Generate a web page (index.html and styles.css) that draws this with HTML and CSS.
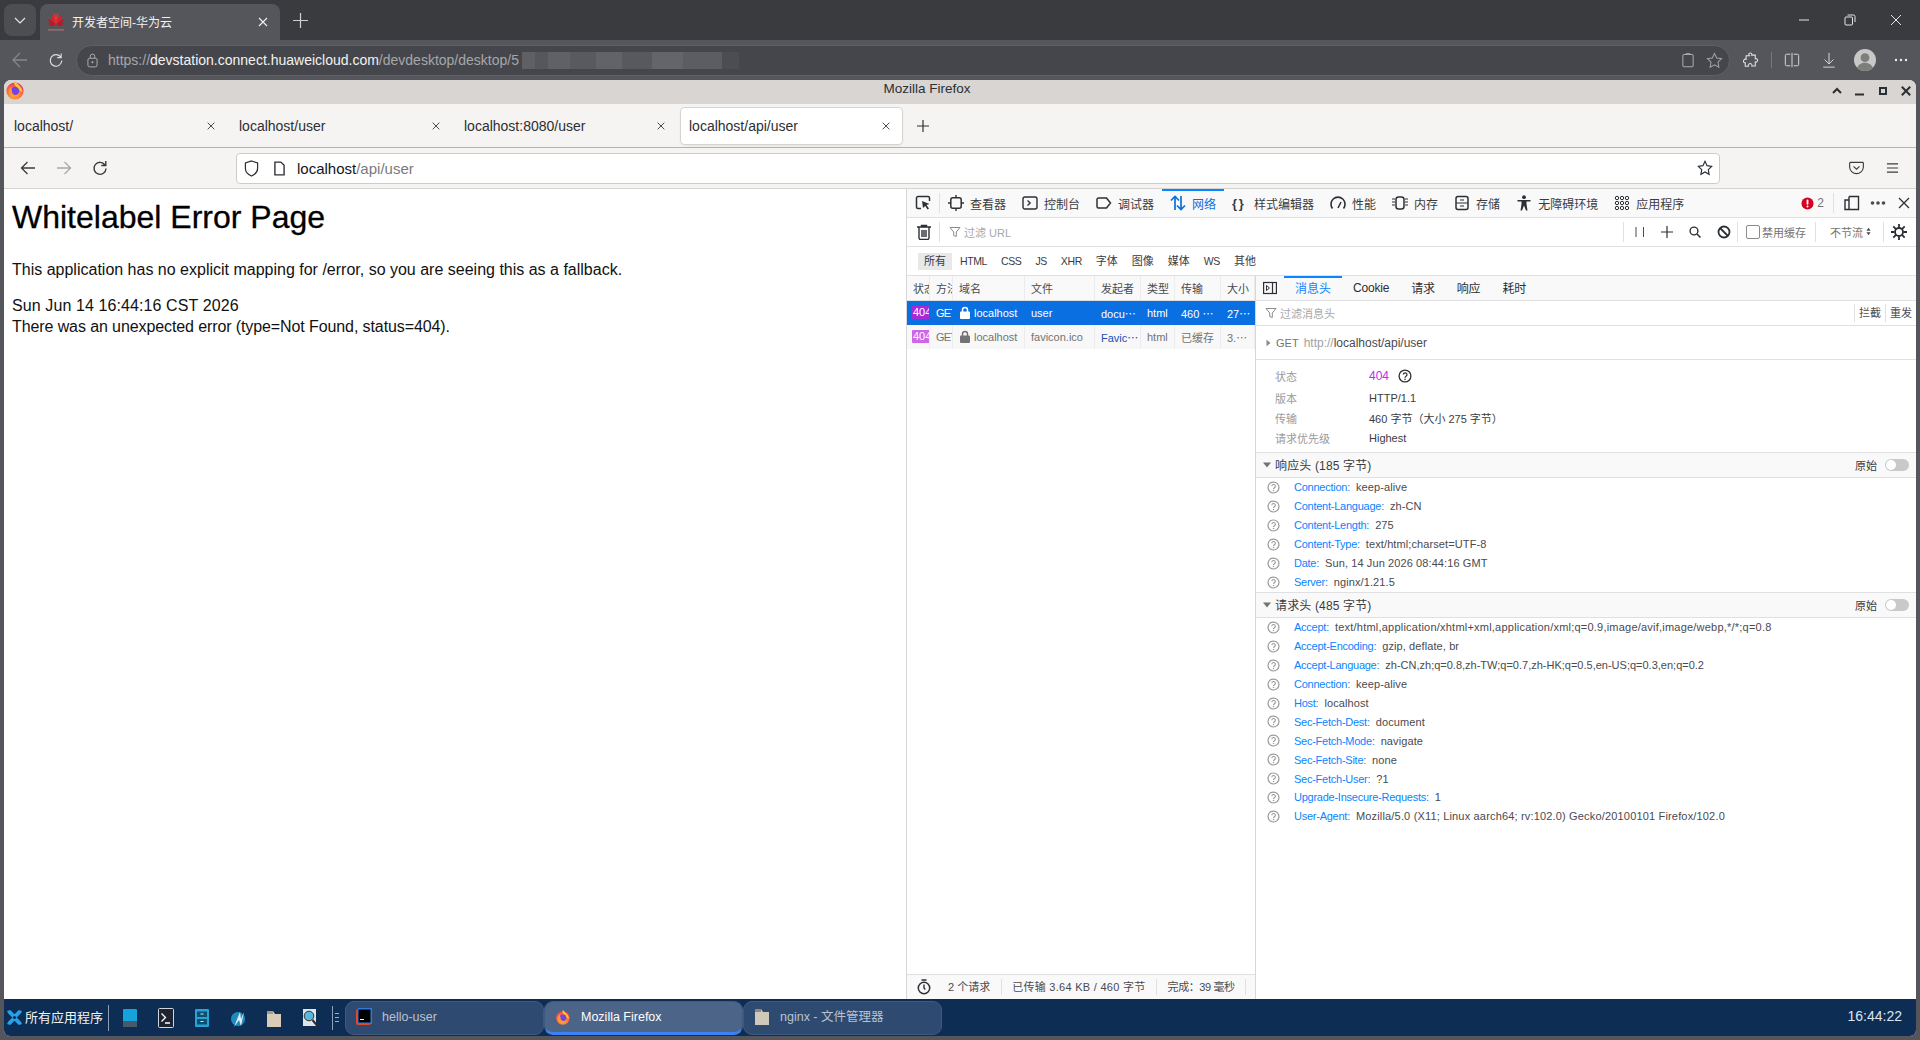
FILE: index.html
```html
<!DOCTYPE html>
<html lang="zh-CN">
<head>
<meta charset="utf-8">
<title>开发者空间-华为云</title>
<link rel="stylesheet" href="styles.css">
</head>
<body>
<svg class="defs" width="0" height="0">
  <defs>
    <radialGradient id="fx" cx="0.45" cy="0.7" r="0.8"><stop offset="0" stop-color="#ffbd2e"/><stop offset="0.5" stop-color="#ff7139"/><stop offset="1" stop-color="#e31587"/></radialGradient>
    <symbol id="firefox" viewBox="0 0 20 20">
      <circle cx="10" cy="11" r="8.6" fill="url(#fx)"/>
      <path d="M10 .8c1 3 4 3.500 5.500 6.200 1.500 2 1.800 4 2 5.500L14 10 9 4z" fill="#ffc52e"/>
      <circle cx="10" cy="11" r="4.200" fill="#7542e5"/>
      <path d="M5.500 7c2 3 1 6 3 7.500 2 1 4.500.5 5.500-1.500-1 4-5 5-8 3C3.500 14 3.500 10 5.500 7z" fill="#ff9a2e"/>
    </symbol>
    <symbol id="q" viewBox="0 0 14 14">
      <circle cx="7" cy="7" r="5.900" fill="none" stroke="currentColor" stroke-width="1.300"/>
      <path d="M5.200 5.600a1.900 1.800 0 1 1 2.800 1.600c-.7.400-1 .8-1 1.500" fill="none" stroke="currentColor" stroke-width="1.200"/>
      <circle cx="7" cy="10.300" r=".8" fill="currentColor"/>
    </symbol>
    <symbol id="close" viewBox="0 0 12 12"><path d="M2 2l8 8M10 2l-8 8" stroke="currentColor" stroke-width="1.100" fill="none"/></symbol>
    <symbol id="filter" viewBox="0 0 12 12"><path d="M1 1.500h10L7.300 6v4.500l-2.600-1V6z" fill="none" stroke="currentColor" stroke-width="1"/></symbol>
    <symbol id="lock" viewBox="0 0 12 13"><path d="M3.500 6V4a2.500 2.500 0 0 1 5 0v2" fill="none" stroke="currentColor" stroke-width="1.500"/><rect x="1" y="5.500" width="10" height="7.500" rx="1" fill="currentColor"/></symbol>
    <symbol id="tri" viewBox="0 0 8 8"><path d="M0 1.500h8L4 6.500z" fill="currentColor"/></symbol>
  </defs>
</svg>

<header class="edge-tabs">
  <div class="edge-list"><svg class="ico14" viewBox="0 0 14 14"><path d="M2 5l5 5 5-5" fill="none" stroke="#e6e6e6" stroke-width="1.200"/></svg></div>
  <div class="edge-tab">
    <svg class="huawei" viewBox="0 0 18 20">
      <path d="M8.600 13C5 11 3 8 4.500 3 6 3.500 8 8 8.600 13zM9.400 13c3.600-2 5.600-5 4.100-10C12 3.500 10 8 9.400 13z" fill="#d8202c"/>
      <path d="M8.500 13C5 12 2 10.500 .8 7c2 .5 6 3 7.700 6zM9.500 13c3.500-1 6.500-2.500 7.700-6-2 .5-6 3-7.700 6zM8 14c-3 .5-5 0-7-3 3-.5 5 1 7 3zM10 14c3 .5 5 0 7-3-3-.5-5 1-7 3z" fill="#c8141e"/>
      <path d="M6.800 1.500C8 .5 9 3 9 7c0-4 1-6.500 2.200-5.500C12 4 10 9 9 12 8 9 6 4 6.800 1.500z" fill="#e8303a"/>
      <rect x="1" y="17" width="16" height="1.800" fill="#8d6a6c"/>
    </svg>
    <span class="edge-tab-title">开发者空间-华为云</span>
    <svg class="ico12 edge-tab-x"><use href="#close"/></svg>
  </div>
  <svg class="edge-plus" viewBox="0 0 16 16"><path d="M8 0v16M0 8h16" stroke="#cfcfcf" stroke-width="1.300"/></svg>
  <div class="edge-winctl">
    <svg class="ico12" viewBox="0 0 12 12"><path d="M1 6h10" stroke="#e6e6e6" stroke-width="1"/></svg>
    <svg class="ico12" viewBox="0 0 12 12"><rect x="1" y="3" width="7.500" height="8" rx="1" fill="none" stroke="#e6e6e6"/><path d="M3.500 1h6a1.500 1.500 0 0 1 1.500 1.500V8" fill="none" stroke="#e6e6e6"/></svg>
    <svg class="ico12" viewBox="0 0 12 12"><path d="M1 1l10 10M11 1L1 11" stroke="#e6e6e6" stroke-width="1"/></svg>
  </div>
</header>

<nav class="edge-nav">
  <svg class="edge-ni back" viewBox="0 0 18 18"><path d="M16 9H2M9 2L2 9l7 7" fill="none" stroke="#85868a" stroke-width="1.300"/></svg>
  <svg class="edge-ni reload" viewBox="0 0 18 18"><path d="M14.500 6A6.500 6.500 0 1 0 15.500 9.500M14.800 1.800v4.500h-4.500" fill="none" stroke="#dcdcdc" stroke-width="1.300"/></svg>
  <div class="edge-url">
    <svg class="edge-lock" viewBox="0 0 12 16"><rect x="1" y="5.500" width="10" height="9.500" rx="2" fill="none" stroke="#b5b5b8"/><path d="M3.500 5.500V3.500a2.500 2.500 0 0 1 5 0v2" fill="none" stroke="#b5b5b8"/><circle cx="6" cy="10" r="1.100" fill="#b5b5b8"/></svg>
    <span class="url-text"><span class="u-dim">https://</span><span class="u-host">devstation.connect.huaweicloud.com</span><span class="u-dim">/devdesktop/desktop/5</span></span>
    <span class="mosaic"></span>
    <span class="spacer"></span>
    <svg class="u-ic" viewBox="0 0 14 18"><path d="M2.500 2.500h9a1.500 1.500 0 0 1 1.500 1.500v11.500a1.500 1.500 0 0 1-1.500 1.500h-9A1.500 1.500 0 0 1 1 15.500V4a1.500 1.500 0 0 1 1.500-1.500z" fill="none" stroke="#a8a9ac" stroke-width="1.200"/><path d="M4.500 2.500v-1h5v1" fill="none" stroke="#a8a9ac"/></svg>
    <svg class="u-star" viewBox="0 0 18 18"><path d="M9 1.500l2.300 4.900 5.200.7-3.800 3.700.9 5.300L9 13.500l-4.600 2.600.9-5.300L1.500 7.100l5.200-.7z" fill="none" stroke="#a0a1a4" stroke-width="1.100"/></svg>
  </div>
  <svg class="edge-ni puzzle" viewBox="0 0 18 18"><path d="M7 1.500c2-1.200 3.500.7 2.800 2h4v4c1.500-.5 3 1 2.500 2.500s-2 1.500-2.500 1.200v4.500H10c.5-1.500-.7-2.700-2-2.700S5.700 14.700 6 16H2.500v-4C.8 12.500-.2 10.500 1 9s2-1 2.500-.8V4.300h3.800C6.800 3.500 6.300 2 7 1.500z" fill="none" stroke="#e2e2e2" stroke-width="1.200"/></svg>
  <span class="edge-sep"></span>
  <svg class="edge-ni split" viewBox="0 0 18 18"><path d="M7 2.500H3a1.500 1.500 0 0 0-1.500 1.500v10A1.500 1.500 0 0 0 3 15.500h4M11 2.500h4A1.500 1.500 0 0 1 16.500 4v10a1.500 1.500 0 0 1-1.500 1.500h-4M9 1v16" fill="none" stroke="#d8d8d8" stroke-width="1.100"/></svg>
  <svg class="edge-ni dl" viewBox="0 0 18 18"><path d="M9 1v12M4 8.500l5 5 5-5M2.500 17h13" fill="none" stroke="#d8d8d8" stroke-width="1.100"/></svg>
  <svg class="avatar" viewBox="0 0 24 24"><circle cx="12" cy="12" r="12" fill="#c8c8c6"/><circle cx="12" cy="9.500" r="4.800" fill="#7e7e7c"/><path d="M3.500 20.500c1.500-4 5-5.500 8.500-5.500s7 1.500 8.500 5.500A12 12 0 0 1 12 24a12 12 0 0 1-8.500-3.500z" fill="#7e7e7c"/></svg>
  <svg class="edge-dots" viewBox="0 0 14 4"><circle cx="2" cy="2" r="1.200" fill="#eee"/><circle cx="7" cy="2" r="1.200" fill="#eee"/><circle cx="12" cy="2" r="1.200" fill="#eee"/></svg>
</nav>

<div class="desktop">
  <main class="ffwin">
    <div class="ff-title">
      <svg class="ff-logo"><use href="#firefox"/></svg>
      <span class="ff-title-text">Mozilla Firefox</span>
      <div class="ff-ctl">
        <svg class="ico10" viewBox="0 0 10 10"><path d="M1 7l4-4 4 4" fill="none" stroke="#2c2f33" stroke-width="2"/></svg>
        <svg class="ico10" viewBox="0 0 10 10"><path d="M0 8.500h9" stroke="#2c2f33" stroke-width="2"/></svg>
        <svg class="ico10" viewBox="0 0 10 10"><rect x="2" y="2" width="6" height="6" fill="none" stroke="#2c2f33" stroke-width="2"/></svg>
        <svg class="ico10" viewBox="0 0 10 10"><path d="M.8.800l8.400 8.400M9.200.800L.8 9.200" stroke="#2c2f33" stroke-width="2"/></svg>
      </div>
    </div>
    <div class="ff-tabs">
      <div class="ff-tab"><span class="ff-tab-t">localhost/</span><svg class="ico10b"><use href="#close"/></svg></div>
      <div class="ff-tab"><span class="ff-tab-t">localhost/user</span><svg class="ico10b"><use href="#close"/></svg></div>
      <div class="ff-tab"><span class="ff-tab-t">localhost:8080/user</span><svg class="ico10b"><use href="#close"/></svg></div>
      <div class="ff-tab active"><span class="ff-tab-t">localhost/api/user</span><svg class="ico10b"><use href="#close"/></svg></div>
      <svg class="ff-plus" viewBox="0 0 12 12"><path d="M6 0v12M0 6h12" stroke="#2c2f33" stroke-width="1.200"/></svg>
    </div>
    <div class="ff-nav">
      <svg class="ff-ni first" viewBox="0 0 16 16"><path d="M15 8H1.500M7.500 2l-6 6 6 6" fill="none" stroke="#3b3b3f" stroke-width="1.300"/></svg>
      <svg class="ff-ni" viewBox="0 0 16 16"><path d="M1 8h13.500M8.500 2l6 6-6 6" fill="none" stroke="#a8a8a8" stroke-width="1.300"/></svg>
      <svg class="ff-ni" viewBox="0 0 16 16"><path d="M13 5A6 6 0 1 0 14 8.500M13.800 1v4.500H9.300" fill="none" stroke="#3b3b3f" stroke-width="1.400"/></svg>
      <div class="ff-url">
        <svg class="ff-shield" viewBox="0 0 16 18"><path d="M8 1l6.500 2v6c0 4-3 6.500-6.500 8-3.500-1.500-6.500-4-6.500-8V3z" fill="none" stroke="#2c2f33" stroke-width="1.300"/></svg>
        <svg class="ff-page" viewBox="0 0 12 16"><path d="M1 1h6.500L11 4.500V15H1z" fill="none" stroke="#2c2f33" stroke-width="1.500"/></svg>
        <span class="ff-url-t">localhost<span class="dim">/api/user</span></span>
        <span class="spacer"></span>
        <svg class="ff-star" viewBox="0 0 18 18"><path d="M9 1.500l2.300 4.900 5.200.7-3.800 3.700.9 5.300L9 13.500l-4.600 2.600.9-5.300L1.500 7.100l5.200-.7z" fill="none" stroke="#2c2f33" stroke-width="1.300"/></svg>
      </div>
      <svg class="ff-pocket" viewBox="0 0 16 14"><path d="M1.500 1h13a.8.800 0 0 1 .8.800v4.700A7.300 7.300 0 0 1 8 13 7.300 7.300 0 0 1 .7 6.500V1.800A.8.800 0 0 1 1.500 1z" fill="none" stroke="#3b3b3f" stroke-width="1.200"/><path d="M4.800 5.200L8 8.300l3.200-3.100" fill="none" stroke="#3b3b3f" stroke-width="1.200"/></svg>
      <svg class="ff-menu" viewBox="0 0 14 12"><path d="M1 1.500h12M1 6h12M1 10.500h12" stroke="#3b3b3f" stroke-width="1.200"/></svg>
    </div>

    <div class="ff-body">
      <section class="page">
        <h1 class="page-h">Whitelabel Error Page</h1>
        <p class="page-p">This application has no explicit mapping for /error, so you are seeing this as a fallback.</p>
        <div class="page-d date">Sun Jun 14 16:44:16 CST 2026</div>
        <div class="page-d msg">There was an unexpected error (type=Not Found, status=404).</div>
      </section>

      <section class="devtools">
        <div class="dt-tabs">
          <svg class="dt-pick" viewBox="0 0 16 16"><path d="M6 13.500H3A1.500 1.500 0 0 1 1.500 12V3A1.500 1.500 0 0 1 3 1.500h10A1.500 1.500 0 0 1 14.500 3v3" fill="none" stroke="#2c2f33" stroke-width="1.500"/><path d="M7 6l7.500 3-3 1 2.500 3.500-1.500 1-2.300-3.500L8 13z" fill="#2c2f33"/></svg>
          <span class="dt-vsep first"></span>
          <div class="dt-tab"><svg class="dti" viewBox="0 0 16 16"><rect x="2.800" y="2.800" width="10.400" height="10.400" rx="2" fill="none" stroke="#2c2f33" stroke-width="1.500"/><path d="M8 0v2.500M8 13.500V16M0 8h2.500M13.500 8H16" stroke="#2c2f33" stroke-width="1.400"/></svg>查看器</div>
          <div class="dt-tab"><svg class="dti" viewBox="0 0 16 16"><rect x="1" y="2" width="14" height="12" rx="2" fill="none" stroke="#2c2f33" stroke-width="1.400"/><path d="M5.500 5.500L8.200 8l-2.700 2.500" fill="none" stroke="#2c2f33" stroke-width="1.300"/></svg>控制台</div>
          <div class="dt-tab"><svg class="dti" viewBox="0 0 16 16"><path d="M2.500 3h8l4 5-4 5h-8A1.500 1.500 0 0 1 1 11.500v-7A1.500 1.500 0 0 1 2.500 3z" fill="none" stroke="#2c2f33" stroke-width="1.500"/></svg>调试器</div>
          <div class="dt-tab on"><svg class="dti" viewBox="0 0 16 16"><path d="M5 15V2M1 5.500L5 1.500l4 4M11 1v13M7 10.500l4 4 4-4" fill="none" stroke="#0a6fe0" stroke-width="1.700"/></svg>网络</div>
          <div class="dt-tab"><span class="dt-brace">{ }</span>样式编辑器</div>
          <div class="dt-tab"><svg class="dti" viewBox="0 0 16 16"><path d="M2.500 13.500A7 7 0 1 1 13.500 13.500" fill="none" stroke="#2c2f33" stroke-width="1.600"/><path d="M8 13l3-6" stroke="#2c2f33" stroke-width="1.600"/></svg>性能</div>
          <div class="dt-tab"><svg class="dti" viewBox="0 0 16 16"><rect x="4" y="2" width="8" height="12" rx="2.500" fill="none" stroke="#2c2f33" stroke-width="1.500"/><path d="M0 4h3M0 7h3M0 10h3M13 4h3M13 7h3M13 10h3" stroke="#2c2f33"/></svg>内存</div>
          <div class="dt-tab"><svg class="dti" viewBox="0 0 16 16"><rect x="2" y="1.500" width="12" height="13" rx="2" fill="none" stroke="#2c2f33" stroke-width="1.500"/><path d="M2 8h12M6 5h4M6 11h4" stroke="#2c2f33" stroke-width="1.200"/></svg>存储</div>
          <div class="dt-tab"><svg class="dti" viewBox="0 0 16 16"><circle cx="8" cy="2.200" r="1.900" fill="#2c2f33"/><path d="M1.500 5h13v1.500h-4V9l1 6.500H10L8 10.500 6 15.500H4.500l1-6.500V6.500h-4z" fill="#2c2f33"/></svg>无障碍环境</div>
          <div class="dt-tab"><svg class="dti" viewBox="0 0 16 16"><g fill="none" stroke="#2c2f33"><circle cx="3" cy="3" r="1.700"/><circle cx="8" cy="3" r="1.700"/><circle cx="13" cy="3" r="1.700"/><circle cx="3" cy="8" r="1.700"/><circle cx="8" cy="8" r="1.700"/><circle cx="13" cy="8" r="1.700"/><circle cx="3" cy="13" r="1.700"/><circle cx="8" cy="13" r="1.700"/><circle cx="13" cy="13" r="1.700"/></g></svg>应用程序</div>
          <span class="spacer"></span>
          <svg class="dt-err" viewBox="0 0 14 14"><circle cx="7" cy="7" r="6.500" fill="#d70022"/><rect x="6" y="2.800" width="2" height="5.500" rx="1" fill="#fff"/><circle cx="7" cy="10.300" r="1.100" fill="#fff"/></svg>
          <span class="dt-errn">2</span>
          <span class="dt-vsep sep2"></span>
          <svg class="dt-dock" viewBox="0 0 16 16"><path d="M5 1.500h9.500v13H5M5 5H1v9.500h4V1.500" fill="none" stroke="#2c2f33" stroke-width="1.400"/></svg>
          <svg class="dt-more" viewBox="0 0 16 4"><circle cx="2.500" cy="2" r="1.800" fill="#4a4a4f"/><circle cx="8" cy="2" r="1.800" fill="#4a4a4f"/><circle cx="13.500" cy="2" r="1.800" fill="#4a4a4f"/></svg>
          <svg class="dt-x" viewBox="0 0 12 12"><path d="M1 1l10 10M11 1L1 11" stroke="#2c2f33" stroke-width="1.300"/></svg>
        </div>

        <div class="dt-filter">
          <svg class="f-trash" viewBox="0 0 14 16"><path d="M0 3h14M4.500 3V1.500h5V3M2 3.500V14a1.500 1.500 0 0 0 1.500 1.500h7A1.500 1.500 0 0 0 12 14V3.500M5 6v7M7 6v7M9 6v7" fill="none" stroke="#2c2f33" stroke-width="1.400"/></svg>
          <span class="dt-vsep fs1"></span>
          <svg class="f-ic"><use href="#filter"/></svg>
          <span class="f-ph">过滤 URL</span>
          <span class="spacer"></span>
          <span class="dt-vsep"></span>
          <svg class="f-pause" viewBox="0 0 10 10"><path d="M1 0v10M8.500 0v10" stroke="#4a4a4f" stroke-width="1"/></svg>
          <svg class="f-plus" viewBox="0 0 12 12"><path d="M6 0v12M0 6h12" stroke="#2c2f33" stroke-width="1.200"/></svg>
          <svg class="f-search" viewBox="0 0 12 12"><circle cx="5" cy="5" r="3.900" fill="none" stroke="#2c2f33" stroke-width="1.400"/><path d="M8 8l3.500 3.500" stroke="#2c2f33" stroke-width="1.500"/></svg>
          <svg class="f-block" viewBox="0 0 14 14"><circle cx="7" cy="7" r="5.500" fill="none" stroke="#2c2f33" stroke-width="1.800"/><path d="M3 3l8 8" stroke="#2c2f33" stroke-width="1.800"/></svg>
          <span class="dt-vsep fs2"></span>
          <span class="f-check"></span>
          <span class="f-cache">禁用缓存</span>
          <span class="dt-vsep fs3"></span>
          <span class="f-throttle">不节流</span>
          <svg class="f-updown" viewBox="0 0 6 10"><path d="M3 .5L5.500 4h-5zM3 9.500L.5 6h5z" fill="#4a4a4f"/></svg>
          <span class="dt-vsep fs4"></span>
          <svg class="f-gear" viewBox="0 0 16 16"><circle cx="8" cy="8" r="4" fill="none" stroke="#2c2f33" stroke-width="1.800"/><path d="M8 0v3.500M8 12.500V16M0 8h3.500M12.500 8H16M2.300 2.300l2.500 2.500M11.200 11.200l2.500 2.500M2.300 13.700l2.500-2.500M11.200 4.800l2.500-2.500" stroke="#2c2f33" stroke-width="1.800"/></svg>
        </div>

        <div class="dt-types">
          <span class="ty on">所有</span><span class="ty lat">HTML</span><span class="ty lat">CSS</span><span class="ty lat">JS</span><span class="ty lat">XHR</span><span class="ty">字体</span><span class="ty">图像</span><span class="ty">媒体</span><span class="ty lat">WS</span><span class="ty">其他</span>
        </div>

        <div class="dt-main">
          <div class="net">
            <div class="row head">
              <span class="c">状态</span><span class="c">方法</span><span class="c">域名</span><span class="c">文件</span><span class="c">发起者</span><span class="c">类型</span><span class="c">传输</span><span class="c">大小</span>
            </div>
            <div class="row sel">
              <span class="c st"><b class="badge b1">404</b></span><span class="c m">GET</span><span class="c dom"><svg class="lk"><use href="#lock"/></svg>localhost</span><span class="c">user</span><span class="c">docu⋯</span><span class="c">html</span><span class="c">460 ⋯</span><span class="c">27⋯</span>
            </div>
            <div class="row alt">
              <span class="c st"><b class="badge b2">404</b></span><span class="c m">GET</span><span class="c dom"><svg class="lk"><use href="#lock"/></svg>localhost</span><span class="c">favicon.ico</span><span class="c ini">Favic⋯</span><span class="c">html</span><span class="c">已缓存</span><span class="c">3.⋯</span>
            </div>
            <span class="spacer"></span>
            <div class="summary">
              <svg class="s-clock" viewBox="0 0 14 16"><circle cx="7" cy="9" r="5.700" fill="none" stroke="#2c2f33" stroke-width="1.500"/><path d="M4.500 1h5M7 5.500V9l1.300 1.500" fill="none" stroke="#2c2f33" stroke-width="1.400"/></svg>
              <span class="s-i n1">2 个请求</span>
              <span class="s-i n2">已传输 3.64 KB / 460 字节</span>
              <span class="s-i n3">完成：39 毫秒</span>
            </div>
          </div>

          <div class="detail">
            <div class="d-tabs">
              <svg class="d-panel" viewBox="0 0 14 14"><rect x=".6" y="1.500" width="12.800" height="11" fill="none" stroke="#2c2f33" stroke-width="1.200"/><path d="M9.500 1.500v11" stroke="#2c2f33" stroke-width="1.200"/><path d="M3.500 4.500L6.500 7l-3 2.500z" fill="none" stroke="#2c2f33"/></svg>
              <span class="d-tab on">消息头</span><span class="d-tab">Cookie</span><span class="d-tab">请求</span><span class="d-tab">响应</span><span class="d-tab">耗时</span>
            </div>
            <div class="d-filter">
              <svg class="f-ic2"><use href="#filter"/></svg>
              <span class="f-ph2">过滤消息头</span>
              <span class="spacer"></span>
              <span class="d-act">拦截</span><span class="d-act">重发</span>
            </div>
            <div class="d-get"><svg class="d-arrow" viewBox="0 0 6 10"><path d="M.5 1l5 4-5 4z" fill="#8a8a8a"/></svg><span class="g-m">GET</span><span class="g-u">http://</span><span class="g-h">localhost/api/user</span></div>
            <div class="d-stats">
              <div class="sr top"><span class="k">状态</span><span class="v purple">404</span><svg class="q-dark"><use href="#q"/></svg></div>
              <div class="sr"><span class="k">版本</span><span class="v">HTTP/1.1</span></div>
              <div class="sr"><span class="k">传输</span><span class="v">460 字节（大小 275 字节）</span></div>
              <div class="sr"><span class="k">请求优先级</span><span class="v">Highest</span></div>
            </div>
            <div class="sec"><svg class="sec-t"><use href="#tri"/></svg><span class="sec-n">响应头 (185 字节)</span><span class="spacer"></span><span class="raw">原始</span><span class="toggle"></span></div>
            <div class="hdrs">
              <div class="h"><svg class="q-g"><use href="#q"/></svg><a class="hn">Connection:</a><span>keep-alive</span></div>
              <div class="h"><svg class="q-g"><use href="#q"/></svg><a class="hn">Content-Language:</a><span>zh-CN</span></div>
              <div class="h"><svg class="q-g"><use href="#q"/></svg><a class="hn">Content-Length:</a><span>275</span></div>
              <div class="h"><svg class="q-g"><use href="#q"/></svg><a class="hn">Content-Type:</a><span>text/html;charset=UTF-8</span></div>
              <div class="h"><svg class="q-g"><use href="#q"/></svg><a class="hn">Date:</a><span>Sun, 14 Jun 2026 08:44:16 GMT</span></div>
              <div class="h"><svg class="q-g"><use href="#q"/></svg><a class="hn">Server:</a><span>nginx/1.21.5</span></div>
            </div>
            <div class="sec"><svg class="sec-t"><use href="#tri"/></svg><span class="sec-n">请求头 (485 字节)</span><span class="spacer"></span><span class="raw">原始</span><span class="toggle"></span></div>
            <div class="hdrs req">
              <div class="h"><svg class="q-g"><use href="#q"/></svg><a class="hn">Accept:</a><span class="v-a">text/html,application/xhtml+xml,application/xml;q=0.9,image/avif,image/webp,*/*;q=0.8</span></div>
              <div class="h"><svg class="q-g"><use href="#q"/></svg><a class="hn">Accept-Encoding:</a><span>gzip, deflate, br</span></div>
              <div class="h"><svg class="q-g"><use href="#q"/></svg><a class="hn">Accept-Language:</a><span class="v-z">zh-CN,zh;q=0.8,zh-TW;q=0.7,zh-HK;q=0.5,en-US;q=0.3,en;q=0.2</span></div>
              <div class="h"><svg class="q-g"><use href="#q"/></svg><a class="hn">Connection:</a><span>keep-alive</span></div>
              <div class="h"><svg class="q-g"><use href="#q"/></svg><a class="hn">Host:</a><span>localhost</span></div>
              <div class="h"><svg class="q-g"><use href="#q"/></svg><a class="hn">Sec-Fetch-Dest:</a><span>document</span></div>
              <div class="h"><svg class="q-g"><use href="#q"/></svg><a class="hn">Sec-Fetch-Mode:</a><span>navigate</span></div>
              <div class="h"><svg class="q-g"><use href="#q"/></svg><a class="hn">Sec-Fetch-Site:</a><span>none</span></div>
              <div class="h"><svg class="q-g"><use href="#q"/></svg><a class="hn">Sec-Fetch-User:</a><span>?1</span></div>
              <div class="h"><svg class="q-g"><use href="#q"/></svg><a class="hn">Upgrade-Insecure-Requests:</a><span>1</span></div>
              <div class="h"><svg class="q-g"><use href="#q"/></svg><a class="hn">User-Agent:</a><span class="v-u">Mozilla/5.0 (X11; Linux aarch64; rv:102.0) Gecko/20100101 Firefox/102.0</span></div>
            </div>
          </div>
        </div>
      </section>
    </div>

    <footer class="taskbar">
      <div class="tb-start"><svg class="tb-x" viewBox="0 0 14 14"><path d="M0 1l3-1 4 4 4-4 3 1-1 2-4 4 4 4 1 2-3 1-4-4-4 4-3-1 1-2 4-4-4-4z" fill="#2aa0e8"/><circle cx="7" cy="7" r="1.500" fill="#0e2d55"/></svg><span class="tb-label">所有应用程序</span></div>
      <span class="tb-sep"></span>
      <svg class="tb-i first" viewBox="0 0 16 20"><rect x="1" y="1" width="14" height="18" rx="1" fill="#14a3dc"/><rect x="1" y="13" width="14" height="6" fill="#47596b"/></svg>
      <svg class="tb-i" viewBox="0 0 16 20"><rect x=".5" y=".5" width="15" height="19" rx="1" fill="#1d2430" stroke="#cfd6dc"/><path d="M3.500 5.500l4 4-4 4M7 15h5" fill="none" stroke="#fff" stroke-width="1.300"/></svg>
      <svg class="tb-i" viewBox="0 0 16 20"><rect x="1" y="1" width="14" height="18" rx="1" fill="#29a3d6"/><rect x="3" y="3.500" width="10" height="5.500" fill="#0f4f73"/><rect x="3" y="11" width="10" height="5.500" fill="#0f4f73"/><path d="M6.500 6h3M6.500 13.500h3" stroke="#cfeaf6"/></svg>
      <svg class="tb-i" viewBox="0 0 16 20"><circle cx="8" cy="11" r="7" fill="#1f8ac0"/><path d="M4 19l6-15 1 7 3-7-3 14-2-6z" fill="#dfeef6"/></svg>
      <svg class="tb-i" viewBox="0 0 16 20"><path d="M1 3h6l2 3h6v13H1z" fill="#d9cdb8"/><path d="M1 3h6v3H1z" fill="#a89a84"/></svg>
      <svg class="tb-i" viewBox="0 0 16 20"><rect x="1" y="1" width="13" height="17" fill="#dfe5e8"/><circle cx="7" cy="8" r="4.800" fill="#58b8e0" stroke="#333"/><path d="M10.500 12l5 6" stroke="#2a2a2a" stroke-width="2"/></svg>
      <div class="tb-grip"><i></i><i></i><i></i></div>
      <div class="tb-btn"><svg class="tb-ij" viewBox="0 0 16 18"><rect x="0" y="1" width="15" height="16" rx="2" fill="#e0482e"/><rect x="2" y="0" width="14" height="16" fill="#2f7be0"/><rect x="2.500" y="1.500" width="12" height="13" fill="#000"/><path d="M4 11.500h4" stroke="#fff"/></svg><span>hello-user</span></div>
      <div class="tb-btn active"><svg class="tb-if"><use href="#firefox"/></svg><span>Mozilla Firefox</span></div>
      <div class="tb-btn"><svg class="tb-in" viewBox="0 0 16 18"><path d="M1 1h6l2 3h6v13H1z" fill="#d0c8b8"/><path d="M1 1h6v3H1z" fill="#918a7c"/></svg><span class="tb-cjk">nginx - 文件管理器</span></div>
      <span class="spacer"></span>
      <span class="tb-clock">16:44:22</span>
    </footer>
  </main>
</div>
</body>
</html>
```

FILE: styles.css
```css
* { box-sizing: border-box; }
html, body { margin: 0; height: 1040px; overflow: hidden; }
body { display: flex; flex-direction: column; background: #55565b; font-family: "Liberation Sans", "Noto Sans CJK SC", sans-serif; font-size: 11px; color: #2c2f33; }
.defs { position: absolute; }
svg { display: block; flex: none; }
.spacer { flex: 1; }

/* Edge tab strip */
.edge-tabs { height: 40px; flex: none; display: flex; align-items: flex-end; background: #3a3b3f; padding-left: 4px; position: relative; }
.edge-list { width: 32px; height: 32px; margin-bottom: 4px; background: #4d4e52; border-radius: 8px; display: flex; align-items: center; justify-content: center; }
.ico14 { width: 14px; height: 14px; }
.ico12 { width: 12px; height: 12px; }
.edge-tab { width: 240px; height: 36px; margin-left: 4px; background: #55565b; border-radius: 8px 8px 0 0; display: flex; align-items: center; padding: 0 11px 0 7px; color: #f2f2f2; }
.huawei { width: 18px; height: 20px; margin-right: 7px; }
.edge-tab-title { font-size: 12px; flex: 1; padding-bottom: 2px; }
.edge-tab-x { color: #f0f0f0; }
.edge-plus { width: 15px; height: 15px; margin: 0 0 12px 13px; }
.edge-winctl { margin-left: auto; display: flex; gap: 34px; padding: 0 18px 14px 0; }

/* Edge toolbar */
.edge-nav { height: 40px; flex: none; display: flex; align-items: center; background: #55565b; padding-left: 11px; }
.edge-ni { width: 16px; height: 16px; }
.back { width: 18px; height: 18px; }
.reload { margin-left: 19px; }
.edge-url { width: 1654px; height: 31px; margin-left: 12px; background: #45464b; border: 1px solid #5f6065; border-radius: 16px; display: flex; align-items: center; padding-left: 10px; padding-right: 6px; }
.edge-lock { width: 11px; height: 15px; }
.url-text { margin-left: 10px; font-size: 14px; white-space: nowrap; }
.u-dim { color: #a6a7aa; }
.u-host { color: #f2f2f2; }
.mosaic { width: 217px; height: 17px; margin-left: 3px; background: linear-gradient(90deg, #5f6064 0 6%, #56575b 6% 12%, #606165 12% 22%, #595a5e 22% 34%, #626367 34% 46%, #58595d 46% 60%, #646569 60% 74%, #5c5d61 74% 92%, #4c4d52 92% 100%); }
.u-ic { width: 12px; height: 16px; margin-right: 12px; }
.u-star { width: 17px; height: 17px; }
.puzzle { margin-left: 13px; }
.edge-sep { width: 1px; height: 16px; background: #77787c; margin: 0 12px; }
.dl { margin-left: 21px; }
.avatar { width: 22px; height: 22px; margin-left: 17px; }
.edge-dots { width: 14px; height: 4px; margin-left: 18px; }

/* Desktop and Firefox window */
.desktop { flex: 1; min-height: 0; padding: 0 4px 4px 4px; display: flex; }
.ffwin { flex: 1; min-width: 0; display: flex; flex-direction: column; background: #fff; border-radius: 7px 7px 6px 6px; overflow: hidden; }
.ff-title { height: 24px; flex: none; background: #d8d5d2; display: flex; align-items: center; position: relative; padding-bottom: 3px; }
.ff-logo { width: 20px; height: 20px; margin: 0 0 0 1px; align-self: flex-start; }
.ff-title-text { position: absolute; left: 0; right: 66px; top: 1px; text-align: center; font-size: 13.500px; line-height: 16px; color: #2c2f33; }
.ff-ctl { margin-left: auto; display: flex; gap: 13px; padding-right: 5px; position: relative; }
.ico10 { width: 10px; height: 10px; }
.ff-tabs { height: 44px; flex: none; background: #f5f4f2; border-bottom: 1px solid #b5b3b0; display: flex; align-items: center; }
.ff-tab { width: 225px; height: 36px; display: flex; align-items: center; padding: 0 13px 0 10px; border-radius: 4px; }
.ff-tab.active { background: #fff; box-shadow: 0 0 0 1px #d6d4d1, 0 1px 3px #0002; width: 221px; margin-left: 2px; padding-left: 8px; padding-right: 11px; }
.ff-tab-t { flex: 1; font-size: 14px; color: #2c2f33; white-space: nowrap; }
.ico10b { width: 10px; height: 10px; color: #3b3b3f; }
.ff-plus { width: 12px; height: 12px; margin-left: 15px; }
.ff-nav { height: 41px; flex: none; background: #f5f4f2; border-bottom: 1px solid #d6d4d1; display: flex; align-items: center; padding-left: 16px; }
.ff-ni { width: 16px; height: 16px; margin-right: 20px; }
.ff-url { width: 1484px; height: 31px; margin-left: 108px; background: #fff; border: 1px solid #cfccc8; border-radius: 4px; display: flex; align-items: center; padding: 0 6px 0 7px; }
.ff-shield { width: 15px; height: 17px; }
.ff-page { width: 11px; height: 15px; margin-left: 15px; }
.ff-url-t { margin-left: 12px; font-size: 15px; color: #15141a; }
.dim { color: #7a7a7c; }
.ff-star { width: 16px; height: 16px; }
.ff-pocket { width: 15px; height: 14px; margin-left: 129px; }
.ff-menu { width: 13px; height: 12px; margin-left: 22px; }

.ff-body { flex: 1; min-height: 0; display: flex; }
.page { width: 902px; flex: none; padding: 8px; }
.page-h { margin: 2px 0 0; font-size: 32px; line-height: 37px; font-weight: 400; color: #000; -webkit-text-stroke: .3px #000; }
.page-p { margin: 24px 0 0; font-size: 16px; line-height: 19px; color: #111; }
.page-d { font-size: 16px; line-height: 21px; color: #111; }
.page-p + .page-d { margin-top: 16px; }
.date { letter-spacing: .1px; }
.msg { letter-spacing: -.1px; }

/* DevTools */
.devtools { flex: 1; min-width: 0; display: flex; flex-direction: column; border-left: 1px solid #d7d7db; }
.dt-tabs { height: 29px; flex: none; display: flex; align-items: center; background: #f9f9fa; border-bottom: 1px solid #e0e0e2; font-size: 12px; padding-left: 8px; }
.dt-pick { width: 16px; height: 16px; }
.dt-vsep { width: 1px; height: 20px; background: #e0e0e2; flex: none; }
.dt-vsep.first { margin-left: 8px; }
.dt-tab { height: 28px; display: flex; align-items: center; gap: 6px; padding: 0 8px; white-space: nowrap; color: #3b3b3f; }
.dt-tab.on { color: #0a6fe0; box-shadow: inset 0 2px 0 #0a84ff; }
.dti { width: 16px; height: 16px; }
.dt-brace { width: 16px; font-weight: 700; font-size: 13px; white-space: pre; letter-spacing: -1px; }
.dt-err { width: 13px; height: 13px; }
.dt-errn { margin-left: 3px; color: #737373; font-size: 12px; }
.sep2 { margin-left: 9px; }
.dt-dock { width: 16px; height: 16px; margin-left: 10px; }
.dt-more { width: 16px; height: 4px; margin-left: 10px; }
.dt-x { width: 12px; height: 12px; margin: 0 6px 0 12px; }
.dt-filter { height: 29px; flex: none; display: flex; align-items: center; border-bottom: 1px solid #e0e0e2; padding: 0 0 1px 10px; background: #fff; }
.f-trash { width: 14px; height: 16px; }
.fs1 { margin-left: 8px; }
.f-ic { width: 12px; height: 12px; margin-left: 9px; color: #8a8a8f; }
.f-ph { margin-left: 3px; font-size: 11px; color: #a8a8ac; }
.f-pause { width: 10px; height: 10px; margin-left: 11px; }
.f-plus { width: 12px; height: 12px; margin-left: 16px; }
.f-search { width: 12px; height: 12px; margin-left: 16px; }
.f-block { width: 14px; height: 14px; margin-left: 16px; }
.fs2 { margin-left: 6px; }
.f-check { width: 14px; height: 14px; margin-left: 8px; border: 1.500px solid #8a8a8f; border-radius: 2px; }
.f-cache { margin-left: 2px; color: #737373; font-size: 11px; }
.fs3 { margin-left: 9px; }
.f-throttle { margin-left: 14px; color: #737373; font-size: 11px; }
.f-updown { width: 5px; height: 9px; margin-left: 3px; }
.fs4 { margin-left: 12px; }
.f-gear { width: 16px; height: 16px; margin: 0 9px 0 7px; }
.dt-types { height: 29px; flex: none; display: flex; align-items: center; border-bottom: 1px solid #e0e0e2; padding-left: 11px; }
.ty { padding: 0 7px; line-height: 17px; color: #3b3b3f; font-size: 11px; }
.ty.lat { font-size: 10.500px; letter-spacing: -.4px; }
.ty.on { background: #e8e8e9; padding: 0 6px; margin-right: 1px; }
.dt-main { flex: 1; min-height: 0; display: flex; }
.net { width: 349px; flex: none; display: flex; flex-direction: column; border-right: 1px solid #d7d7db; }
.row { display: grid; grid-template-columns: 23px 23px 72px 70px 46px 34px 46px 34px; height: 24px; align-items: stretch; font-size: 11px; }
.row.head { height: 25px; background: #f9f9fa; border-bottom: 1px solid #e0e0e2; color: #4a4a4f; }
.c { display: flex; align-items: center; padding-left: 6px; padding-bottom: 1px; overflow: hidden; white-space: nowrap; border-right: 1px solid #ececee; }
.c.m { letter-spacing: -.8px; }
.row.sel { background: #0a6fe0; color: #fff; }
.row.sel .c { border-right-color: #0a6fe0; }
.row.alt { background: #f8f8f8; color: #737373; }
.c.st { padding-left: 5px; }
.badge { display: block; font-weight: 400; color: #fff; width: 18px; height: 13px; line-height: 13px; padding-left: 1px; overflow: hidden; border-radius: 1px; flex: none; }
.b1 { background: #a72ad6; }
.b2 { background: #cf66e8; }
.c.dom { padding-left: 6px; gap: 3px; }
.lk { width: 12px; height: 13px; }
.ini { color: #1a4fb5; }
.summary { height: 25px; flex: none; border-top: 1px solid #e0e0e2; background: #f9f9fa; display: flex; align-items: center; padding-left: 10px; color: #4a4a4f; }
.s-clock { width: 14px; height: 16px; margin-right: 6px; }
.s-i { padding: 0 10.500px; border-right: 1px solid #e0e0e2; line-height: 16px; white-space: nowrap; }
.s-i.n1 { padding-left: 11px; }
.n2 { letter-spacing: .28px; }
.n3 { letter-spacing: -.4px; }
.detail { flex: 1; min-width: 0; display: flex; flex-direction: column; overflow: hidden; }
.d-tabs { height: 25px; flex: none; background: #f9f9fa; border-bottom: 1px solid #e0e0e2; display: flex; align-items: stretch; padding-left: 7px; font-size: 12px; }
.d-panel { width: 14px; height: 14px; align-self: center; margin-right: 7px; }
.d-tab { display: flex; align-items: center; padding: 0 11px 1px; color: #2c2f33; letter-spacing: -.2px; }
.d-tab.on { color: #0a84ff; box-shadow: inset 0 2px 0 #0a84ff; width: 58px; justify-content: center; letter-spacing: 0; }
.d-filter { height: 25px; flex: none; border-bottom: 1px solid #e0e0e2; display: flex; align-items: center; padding: 0 0 1px 9px; }
.f-ic2 { width: 12px; height: 12px; color: #8a8a8f; }
.f-ph2 { margin-left: 3px; color: #a8a8ac; }
.d-act { padding: 0 4px; border-left: 1px solid #e0e0e2; color: #4a4a4f; line-height: 18px; }
.d-get { height: 34px; flex: none; border-bottom: 1px solid #e0e0e2; display: flex; align-items: center; padding-left: 10px; }
.d-arrow { width: 5px; height: 8px; margin-right: 5px; }
.g-m { color: #737373; margin-right: 5px; }
.g-u { color: #a0a0a4; font-size: 12px; }
.g-h { color: #4a4a4f; font-size: 12px; }
.d-stats { height: 93px; flex: none; padding-top: 6px; border-bottom: 1px solid #e0e0e2; }
.sr { display: flex; align-items: center; height: 20px; padding: 0 0 1px 19px; }
.sr.top { margin-bottom: 2px; }
.k { width: 94px; color: #9a9a9e; }
.v { color: #3b3b3f; }
.purple { color: #c22be8; font-size: 12px; }
.q-dark { width: 14px; height: 14px; margin-left: 9px; color: #2c2f33; }
.sec { height: 25px; flex: none; display: flex; align-items: center; background: #f9f9fa; border-bottom: 1px solid #e0e0e2; padding: 0 7px 1px; }
.sec-t { width: 8px; height: 8px; color: #737373; margin-right: 4px; }
.sec-n { font-size: 12px; color: #3b3b3f; letter-spacing: .15px; }
.raw { color: #3b3b3f; margin-right: 8px; }
.toggle { width: 24px; height: 12px; border-radius: 6px; background: #c9c9cc; position: relative; }
.toggle::after { content: ""; position: absolute; left: 1px; top: 1px; width: 10px; height: 10px; border-radius: 50%; background: #fff; }
.hdrs { flex: none; padding-left: 11px; border-bottom: 1px solid #e0e0e2; }
.hdrs.req { border-bottom: 0; }
.h { height: 19px; padding-bottom: 1px; display: flex; align-items: center; white-space: nowrap; color: #4a4a4f; letter-spacing: .1px; }
.req .h { height: 18.900px; padding-bottom: 0; }
.q-g { width: 13px; height: 13px; color: #9a9a9e; margin-right: 14px; }
.hn { color: #0a84ff; margin-right: 6px; letter-spacing: -.25px; }
.v-a { letter-spacing: .22px; }
.v-u { letter-spacing: .17px; }
.v-z { letter-spacing: 0; }

/* Taskbar */
.taskbar { height: 37px; flex: none; background: #0e2d55; display: flex; align-items: center; color: #fff; padding-left: 3px; }
.tb-start { display: flex; align-items: center; gap: 3px; font-size: 13px; color: #f2f2f2; width: 101px; }
.tb-label { padding-bottom: 3px; }
.tb-x { width: 15px; height: 15px; }
.tb-sep { width: 1px; height: 26px; background: #8da0b8; }
.tb-i { width: 16px; height: 20px; margin-left: 20px; }
.tb-i.first { margin-left: 13px; }
.tb-grip { display: flex; flex-direction: column; gap: 3px; margin-left: 14px; border-left: 1px solid #8da0b8; padding-left: 2px; height: 24px; justify-content: center; }
.tb-grip i { display: block; width: 4px; height: 1px; background: #a0aec0; }
.tb-btn { width: 199px; height: 34px; display: flex; align-items: center; gap: 10px; padding: 0 0 1px 10px; background: #2f4a70; border: 1px solid #3f5a80; border-radius: 9px; font-size: 12.500px; color: #b8c2cf; }
.tb-cjk { padding-bottom: 3px; }
.tb-grip + .tb-btn { margin-left: 6px; }
.tb-btn.active { background: #4b6487; color: #fff; border-bottom: 3px solid #3b82f6; padding-bottom: 0; }
.tb-ij, .tb-in, .tb-if { width: 16px; height: 18px; }
.tb-clock { font-size: 14px; color: #dfe5ee; padding: 0 14px 3px 0; }
```
